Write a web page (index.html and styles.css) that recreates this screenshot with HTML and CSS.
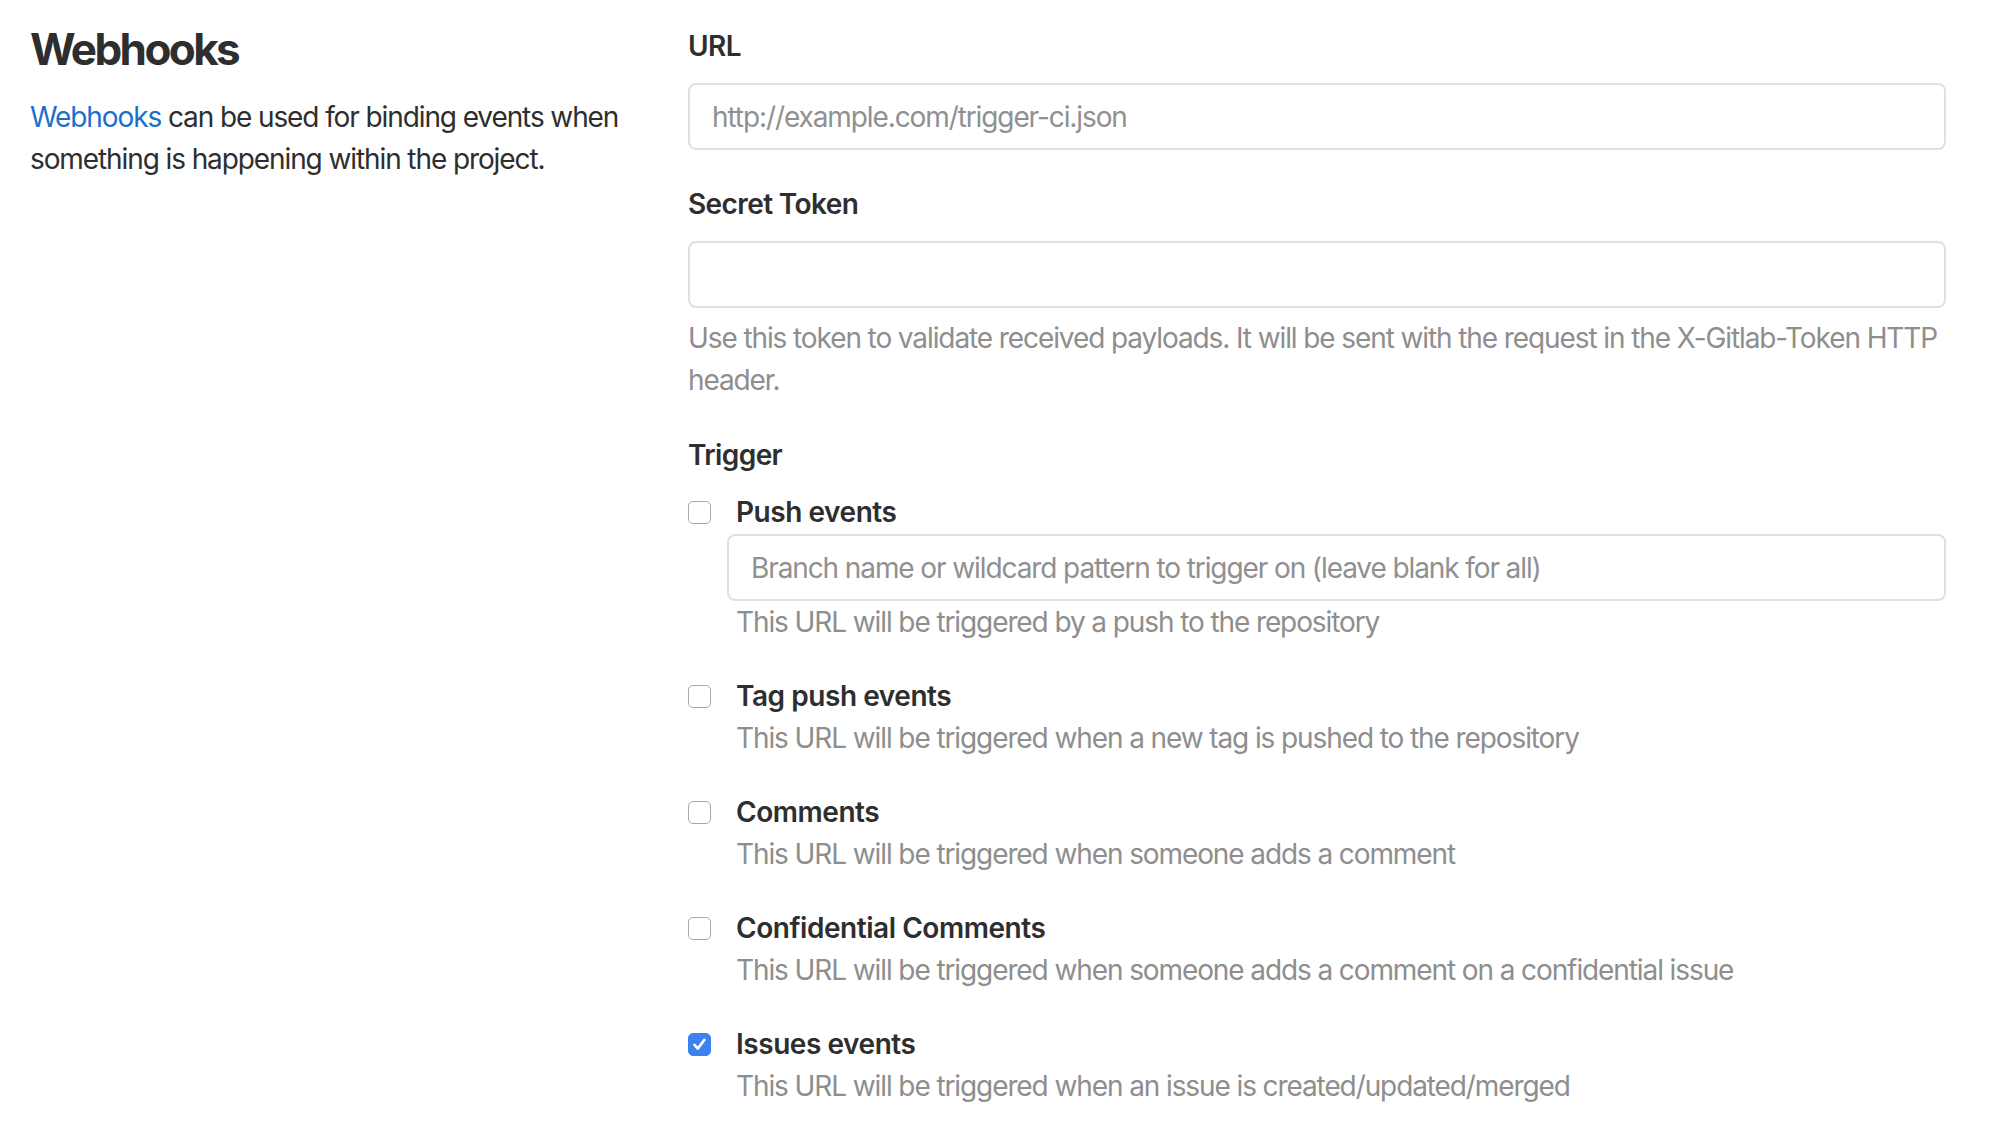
FILE: index.html
```html
<!DOCTYPE html>
<html lang="en">
<head>
<meta charset="utf-8">
<title>Webhooks</title>
<link rel="stylesheet" href="styles.css">
</head>
<body>
<div class="page">
  <section class="intro">
    <h4 class="title">Webhooks</h4>
    <p class="lead"><a class="link" href="#">Webhooks</a> <span>can be used for binding events when</span> <span>something is happening within the project.</span></p>
  </section>
  <form class="settings">
    <div class="group">
      <label class="label">URL</label>
      <input class="field" type="text" placeholder="http://example.com/trigger-ci.json">
    </div>
    <div class="group">
      <label class="label">Secret Token</label>
      <input class="field" type="text">
      <p class="help help-token">Use this token to validate received payloads. It will be sent with the request in the X-Gitlab-Token HTTP header.</p>
    </div>
    <div class="group">
      <label class="label">Trigger</label>
      <div class="checks">
        <div class="check">
          <span class="box"></span>
          <div class="check-body">
            <label class="check-label">Push events</label>
            <input class="field field-branch" type="text" placeholder="Branch name or wildcard pattern to trigger on (leave blank for all)">
            <p class="help">This URL will be triggered by a push to the repository</p>
          </div>
        </div>
        <div class="check">
          <span class="box"></span>
          <div class="check-body">
            <label class="check-label">Tag push events</label>
            <p class="help">This URL will be triggered when a new tag is pushed to the repository</p>
          </div>
        </div>
        <div class="check">
          <span class="box"></span>
          <div class="check-body">
            <label class="check-label">Comments</label>
            <p class="help">This URL will be triggered when someone adds a comment</p>
          </div>
        </div>
        <div class="check">
          <span class="box"></span>
          <div class="check-body">
            <label class="check-label">Confidential Comments</label>
            <p class="help">This URL will be triggered when someone adds a comment on a confidential issue</p>
          </div>
        </div>
        <div class="check">
          <span class="box box-checked"><svg width="23" height="23" viewBox="0 0 23 23"><path d="M6.5 11.8 L9.8 15.6 L16.4 6.8" fill="none" stroke="#ffffff" stroke-width="2.6" stroke-linecap="round" stroke-linejoin="round"/></svg></span>
          <div class="check-body">
            <label class="check-label">Issues events</label>
            <p class="help">This URL will be triggered when an issue is created/updated/merged</p>
          </div>
        </div>
      </div>
    </div>
  </form>
</div>
</body>
</html>
```
FILE: styles.css
```css
* { box-sizing: border-box; }
html, body { margin: 0; padding: 0; background: #ffffff; }
body {
  font-family: Inter, "Noto Sans", "Liberation Sans", sans-serif;
  font-size: 28px;
  line-height: 42px;
  letter-spacing: -1.1px;
  color: #2e2e2e;
}
.page {
  display: flex;
  padding: 0 56px 0 30px;
  gap: 30px;
}
.intro {
  width: 628px;
  flex: 0 0 628px;
  padding-top: 23px;
}
.title {
  margin: 0;
  font-size: 44px;
  line-height: 52px;
  font-weight: 700;
  letter-spacing: -2.6px;
  color: #2e2e2e;
}
.lead {
  margin: 21px 0 0;
  font-size: 28px;
  line-height: 42px;
}
.link { color: #1f6fc9; text-decoration: none; }
.settings {
  flex: 1;
  padding-top: 25px;
}
.group { margin-bottom: 33px; }
.label {
  display: block;
  font-weight: 600;
  letter-spacing: -0.6px;
  line-height: 42px;
  margin-bottom: 16px;
}
.field {
  display: block;
  width: 100%;
  height: 67px;
  border: 2px solid #e0e0e0;
  border-radius: 8px;
  padding: 0 22px;
  font-family: inherit;
  font-size: 28px;
  letter-spacing: -1.1px;
  color: #2e2e2e;
  background: #ffffff;
  outline: none;
}
.field::placeholder { color: #909090; }
.help {
  margin: 0;
  color: #8e8e8e;
  line-height: 42px;
}
.help-token { margin-top: 9px; }
.checks { display: flex; flex-direction: column; gap: 32px; margin-top: -1px; }
.check { display: flex; align-items: flex-start; gap: 25px; }
.box {
  flex: 0 0 23px;
  width: 23px;
  height: 23px;
  margin-top: 10px;
  border: 1.5px solid #a8a8a8;
  border-radius: 5px;
  background: #ffffff;
  display: flex;
  align-items: center;
  justify-content: center;
}
.box-checked {
  background: #3b82f0;
  border-color: #3b82f0;
}
.box-checked svg { display: block; flex: 0 0 23px; }
.check-body { flex: 1; min-width: 0; }
.check-label {
  display: block;
  font-weight: 600;
  letter-spacing: -0.45px;
  line-height: 42px;
}
.field-branch {
  margin-left: -9px;
  width: calc(100% + 9px);
  margin-top: 1px;
}
```
